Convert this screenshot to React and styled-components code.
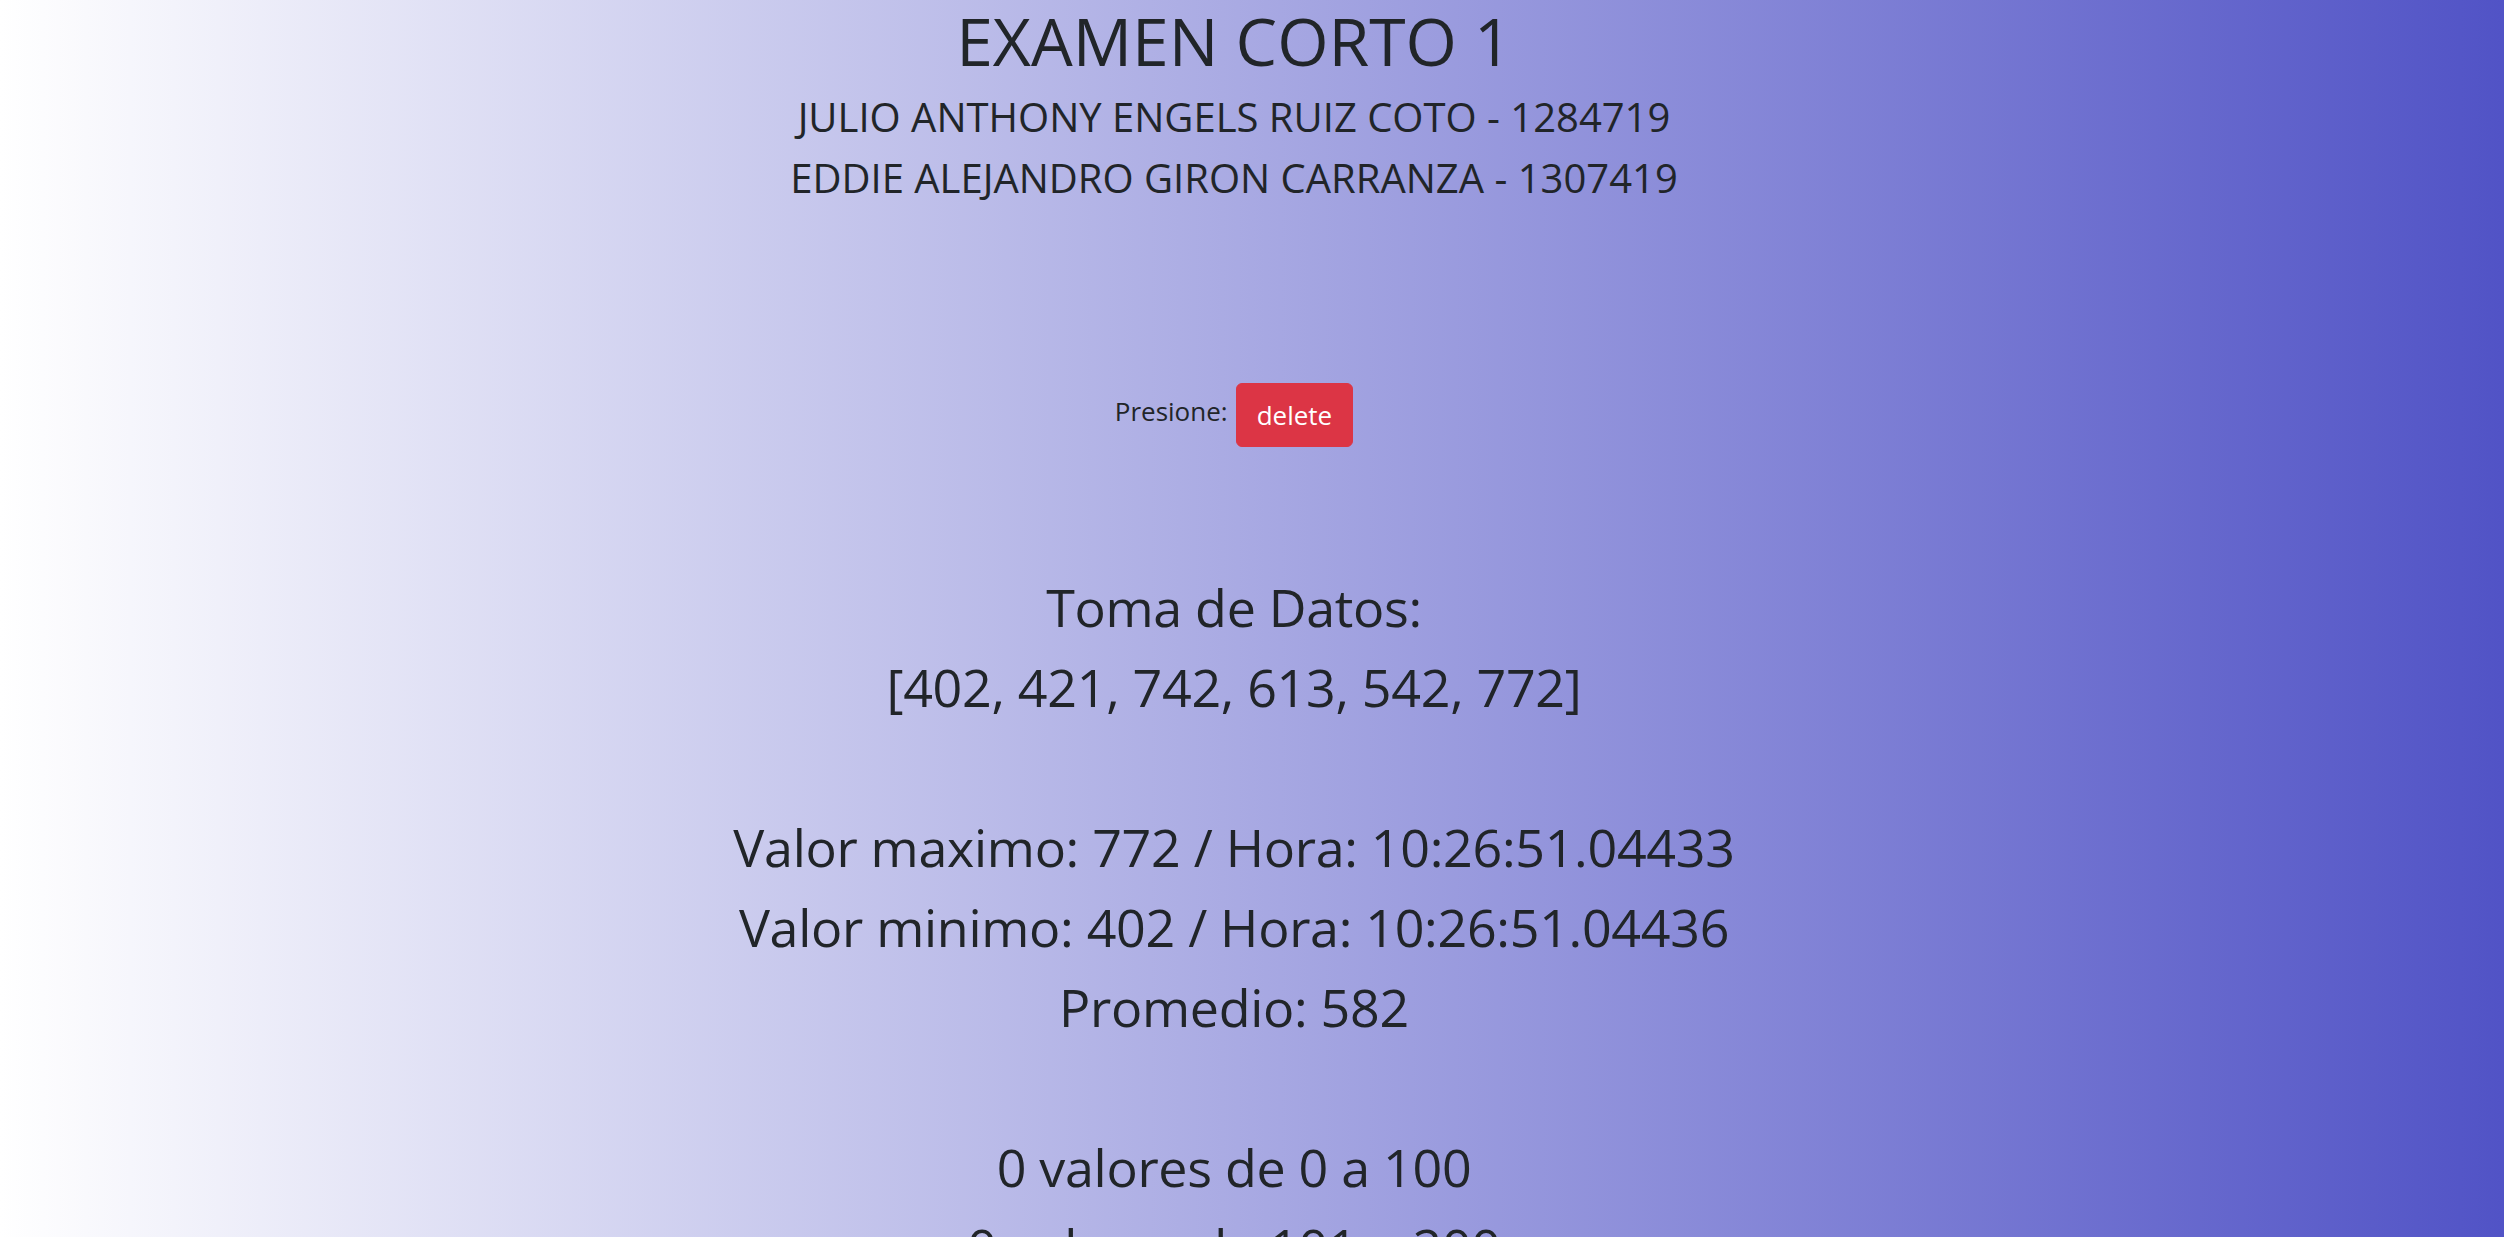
import React from "react";
import styled, { createGlobalStyle } from "styled-components";

const GlobalStyle = createGlobalStyle`
  html, body {
    margin: 0;
    padding: 0;
    overflow: hidden;
  }
  body {
    background: linear-gradient(to right, #ffffff 0%, #5153c6 100%);
    min-height: 100vh;
    font-family: "Open Sans", "Noto Sans", sans-serif;
    color: #212529;
  }
`;

const Page = styled.main`
  text-align: center;
  padding-right: 36px;
  height: 100vh;
  box-sizing: border-box;
`;

const Title = styled.h1`
  margin: 0 0 13px;
  font-size: 66px;
  line-height: 80px;
  font-weight: 400;
`;

const Author = styled.h4`
  margin: 0 0 13px;
  font-size: 40px;
  line-height: 48px;
  font-weight: 400;
`;

const ActionRow = styled.div`
  display: flex;
  justify-content: center;
  align-items: flex-start;
  gap: 8px;
  margin-top: 181px;
`;

const Label = styled.span`
  font-size: 26px;
  line-height: 42px;
  margin-top: 7px;
`;

const DeleteButton = styled.button`
  height: 64px;
  padding: 0 20px;
  font-family: inherit;
  font-size: 26px;
  color: #fff;
  background: #dc3545;
  border: 1px solid #dc3545;
  border-radius: 6px;
  cursor: pointer;
`;

const Results = styled.section`
  margin-top: 120px;
  font-size: 52px;
  line-height: 80px;
  letter-spacing: -0.3px;
`;

const Line = styled.div`
  min-height: 80px;
  white-space: pre;
`;

const datos = [402, 421, 742, 613, 542, 772];

const rangos = [
  [0, 100],
  [101, 200],
  [201, 300],
  [301, 400],
  [401, 500],
  [501, 600],
  [601, 700],
  [701, 800],
];

export default function App() {
  const promedio = Math.round(datos.reduce((a, b) => a + b, 0) / datos.length);
  return (
    <>
      <GlobalStyle />
      <Page>
        <Title>EXAMEN CORTO 1</Title>
        <Author>JULIO ANTHONY ENGELS RUIZ COTO - 1284719</Author>
        <Author>EDDIE ALEJANDRO GIRON CARRANZA - 1307419</Author>
        <ActionRow>
          <Label>Presione:</Label>
          <DeleteButton>delete</DeleteButton>
        </ActionRow>
        <Results>
          <Line>Toma de Datos:</Line>
          <Line>[{datos.join(", ")}]</Line>
          <Line />
          <Line>Valor maximo: 772 / Hora: 10:26:51.04433</Line>
          <Line>Valor minimo: 402 / Hora: 10:26:51.04436</Line>
          <Line>Promedio: {promedio}</Line>
          <Line />
          {rangos.map(([a, b]) => (
            <Line key={a}>
              {datos.filter((d) => d >= a && d <= b).length} valores de {a} a {b}
            </Line>
          ))}
        </Results>
      </Page>
    </>
  );
}
